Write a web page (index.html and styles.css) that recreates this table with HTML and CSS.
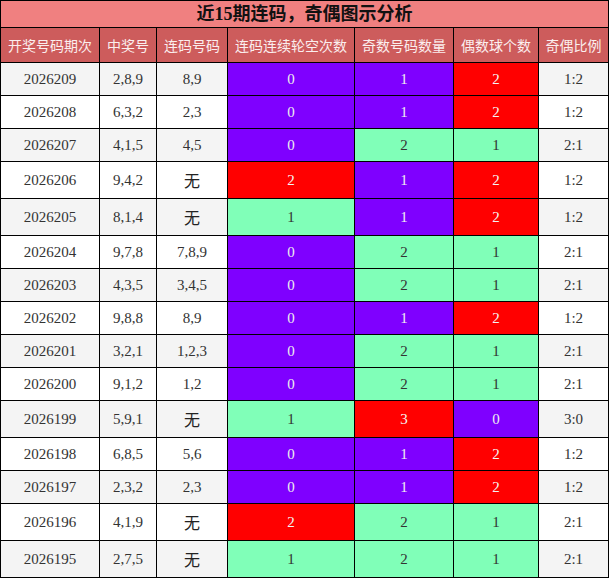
FILE: index.html
```html
<!DOCTYPE html>
<html lang="zh">
<head>
<meta charset="utf-8">
<title>近15期连码，奇偶图示分析</title>
<link rel="stylesheet" href="styles.css">
</head>
<body>
<table class="grid">
  <colgroup>
    <col class="c1"><col class="c2"><col class="c3"><col class="c4"><col class="c5"><col class="c6"><col class="c7">
  </colgroup>
  <thead>
    <tr><th class="title" colspan="7">近15期连码，奇偶图示分析</th></tr>
    <tr class="head">
      <th>开奖号码期次</th><th>中奖号</th><th>连码号码</th><th>连码连续轮空次数</th><th>奇数号码数量</th><th>偶数球个数</th><th>奇偶比例</th>
    </tr>
  </thead>
  <tbody>
    <tr><td>2026209</td><td>2,8,9</td><td>8,9</td><td class="p">0</td><td class="p">1</td><td class="r">2</td><td>1:2</td></tr>
    <tr><td>2026208</td><td>6,3,2</td><td>2,3</td><td class="p">0</td><td class="p">1</td><td class="r">2</td><td>1:2</td></tr>
    <tr><td>2026207</td><td>4,1,5</td><td>4,5</td><td class="p">0</td><td class="g">2</td><td class="g">1</td><td>2:1</td></tr>
    <tr><td>2026206</td><td>9,4,2</td><td class="none">无</td><td class="r">2</td><td class="p">1</td><td class="r">2</td><td>1:2</td></tr>
    <tr><td>2026205</td><td>8,1,4</td><td class="none">无</td><td class="g">1</td><td class="p">1</td><td class="r">2</td><td>1:2</td></tr>
    <tr><td>2026204</td><td>9,7,8</td><td>7,8,9</td><td class="p">0</td><td class="g">2</td><td class="g">1</td><td>2:1</td></tr>
    <tr><td>2026203</td><td>4,3,5</td><td>3,4,5</td><td class="p">0</td><td class="g">2</td><td class="g">1</td><td>2:1</td></tr>
    <tr><td>2026202</td><td>9,8,8</td><td>8,9</td><td class="p">0</td><td class="p">1</td><td class="r">2</td><td>1:2</td></tr>
    <tr><td>2026201</td><td>3,2,1</td><td>1,2,3</td><td class="p">0</td><td class="g">2</td><td class="g">1</td><td>2:1</td></tr>
    <tr><td>2026200</td><td>9,1,2</td><td>1,2</td><td class="p">0</td><td class="g">2</td><td class="g">1</td><td>2:1</td></tr>
    <tr><td>2026199</td><td>5,9,1</td><td class="none">无</td><td class="g">1</td><td class="r">3</td><td class="p">0</td><td>3:0</td></tr>
    <tr><td>2026198</td><td>6,8,5</td><td>5,6</td><td class="p">0</td><td class="p">1</td><td class="r">2</td><td>1:2</td></tr>
    <tr><td>2026197</td><td>2,3,2</td><td>2,3</td><td class="p">0</td><td class="p">1</td><td class="r">2</td><td>1:2</td></tr>
    <tr><td>2026196</td><td>4,1,9</td><td class="none">无</td><td class="r">2</td><td class="g">2</td><td class="g">1</td><td>2:1</td></tr>
    <tr><td>2026195</td><td>2,7,5</td><td class="none">无</td><td class="g">1</td><td class="g">2</td><td class="g">1</td><td>2:1</td></tr>
  </tbody>
</table>
</body>
</html>
```

FILE: styles.css
```css
html, body {
  margin: 0;
  padding: 0;
  background: #ffffff;
}

.grid {
  border-collapse: collapse;
  table-layout: fixed;
  width: 609px;
  font-family: "Liberation Serif", "Noto Sans CJK SC", serif;
  font-size: 15px;
  color: #333333;
}

.c1 { width: 99px; }
.c2 { width: 57px; }
.c3 { width: 71px; }
.c4 { width: 127px; }
.c5 { width: 99px; }
.c6 { width: 85px; }
.c7 { width: 70px; }

.grid th,
.grid td {
  border: 1px solid #000000;
  text-align: center;
  padding: 0;
}

.title {
  background: #f08080;
  color: #111111;
  font-family: "Liberation Serif", "Noto Sans CJK SC", serif;
  font-weight: bold;
  font-size: 18px;
  height: 26px;
  line-height: 26px;
  border-bottom: 2px solid #000000;
}

.head th {
  background: #cd5c5c;
  color: #fbeeee;
  font-family: "Noto Sans CJK SC", sans-serif;
  font-weight: normal;
  font-size: 14px;
  height: 34px;
  line-height: 20px;
}

.grid tbody td {
  height: 32px;
  line-height: 17px;
}

.grid tbody tr:nth-child(odd) td { background: #f4f4f4; }
.grid tbody tr:nth-child(even) td { background: #ffffff; }

.grid tbody tr td.none {
  font-family: "Noto Sans CJK SC", sans-serif;
  font-size: 16px;
  color: #222222;
  height: 36px;
}

.grid tbody tr:nth-child(n) td.p { background: #7f00ff; color: #eeeeee; }
.grid tbody tr:nth-child(n) td.r { background: #ff0000; color: #f4f4f4; }
.grid tbody tr:nth-child(n) td.g { background: #80ffb8; color: #333333; }
```
